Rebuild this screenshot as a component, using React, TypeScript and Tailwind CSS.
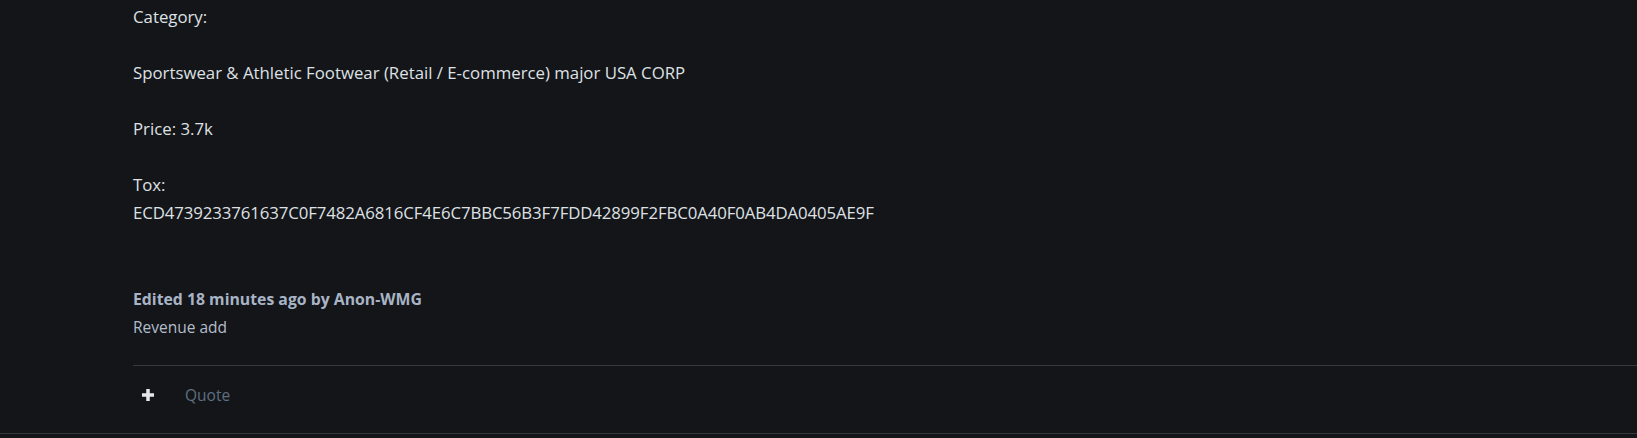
function PlusIcon() {
  return (
    <svg width="12" height="12" viewBox="0 0 12 12" className="text-[#e4e6ea]">
      <rect x="4.25" y="0" width="3.5" height="12" fill="currentColor" />
      <rect x="0" y="4.25" width="12" height="3.5" fill="currentColor" />
    </svg>
  );
}

export default function App() {
  return (
    <div className="min-h-[438px] bg-[#141519] font-['Open_Sans','Noto_Sans',sans-serif]">
      <div className="border-b border-[#37383c]">
        <div className="pl-[133px]">
          <div className="pt-[3px] text-[16.8px] leading-[28px] text-[#dfe1e5]">
            Category:
            <br />
            <br />
            Sportswear &amp; Athletic Footwear (Retail / E-commerce) major USA CORP
            <br />
            <br />
            Price: 3.7k
            <br />
            <br />
            Tox:
            <br />
            <span className="tracking-[-0.1px]">
              ECD4739233761637C0F7482A6816CF4E6C7BBC56B3F7FDD42899F2FBC0A40F0AB4DA0405AE9F
            </span>
          </div>

          <div className="mt-[62px] text-[15.8px] font-bold leading-[20px] text-[#a8b4c5]">
            Edited 18 minutes ago by Anon-WMG
          </div>
          <div className="mt-[7px] text-[15.5px] leading-[22px] text-[#b3bdca]">Revenue add</div>

          <div className="mt-[27px] flex h-[68px] items-center border-t border-[#37383c] pb-[10px]">
            <button className="ml-[3px] flex h-[24px] w-[24px] items-center justify-center">
              <PlusIcon />
            </button>
            <span className="ml-[25px] mt-[3px] text-[15.5px] text-[#5f6f82]">Quote</span>
          </div>
        </div>
      </div>
    </div>
  );
}
